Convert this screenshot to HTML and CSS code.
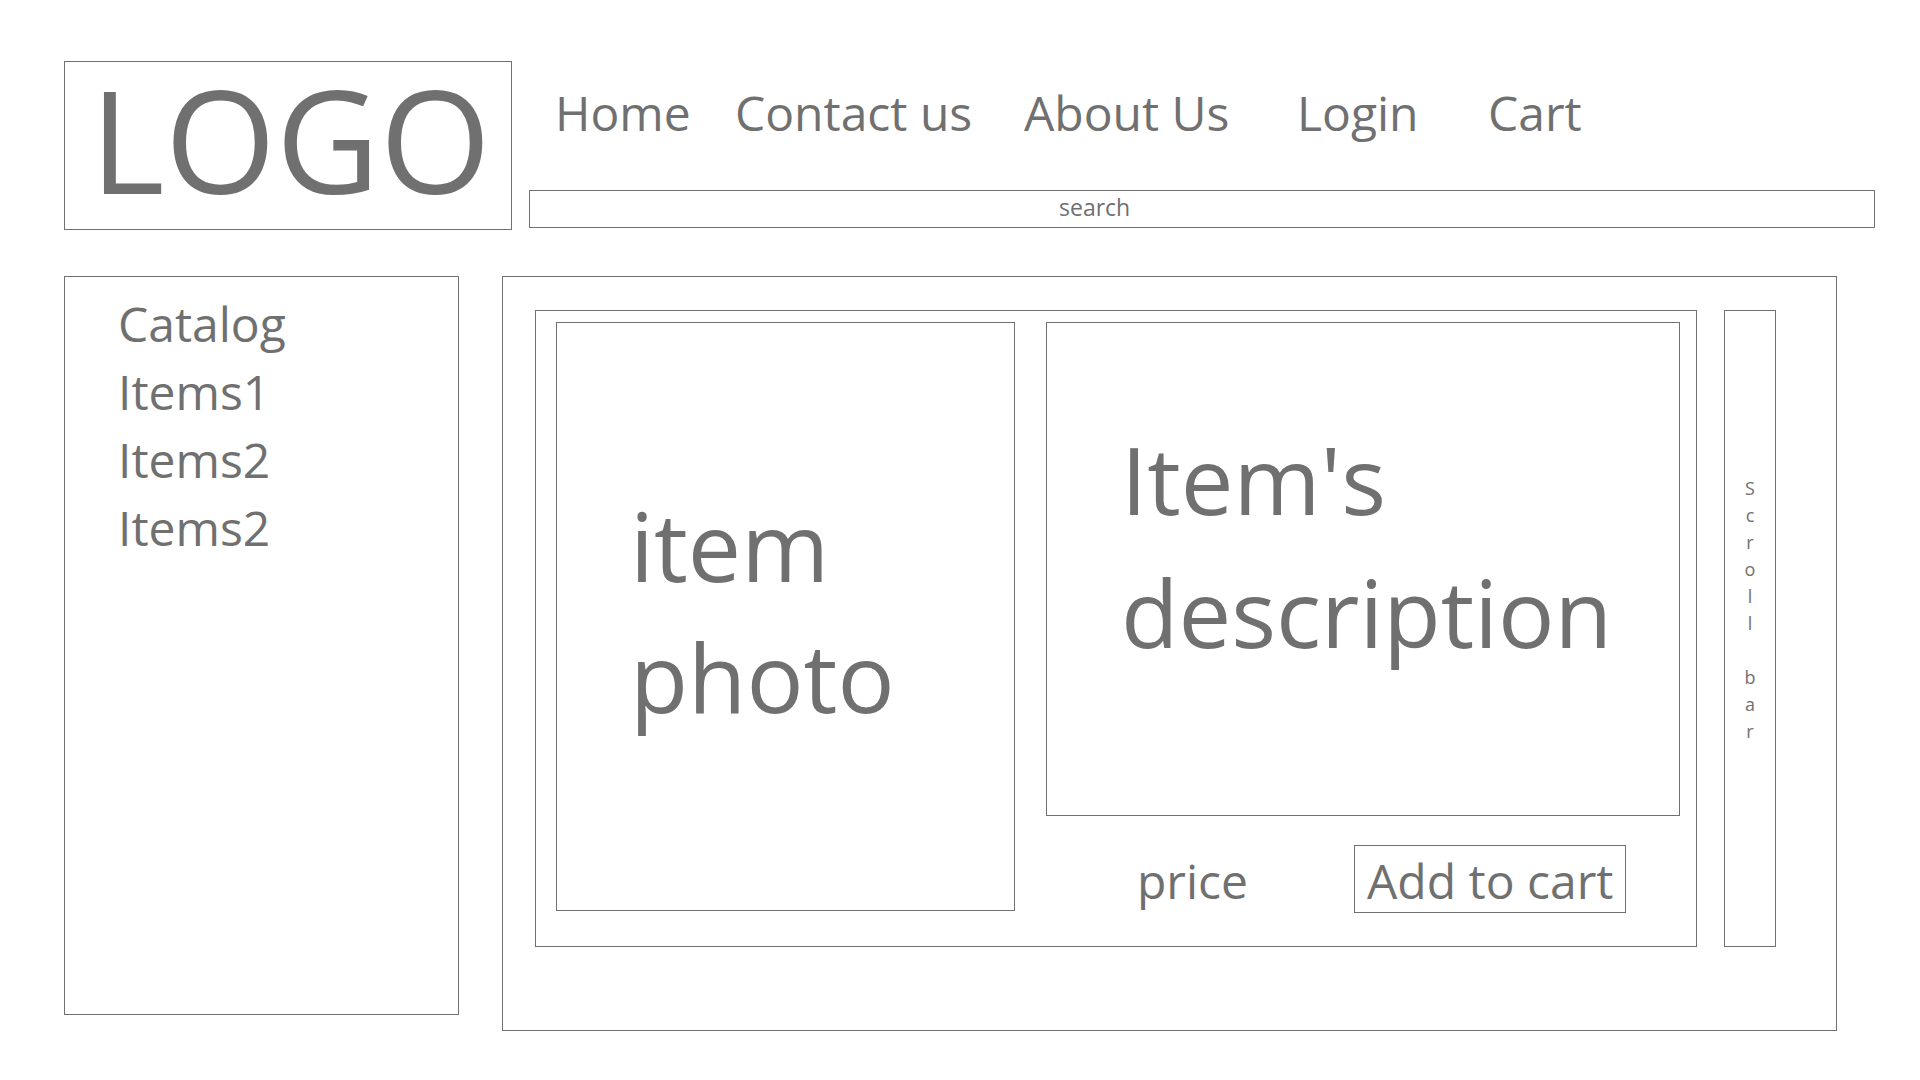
FILE: index.html
```html
<!DOCTYPE html>
<html lang="en">
<head>
<meta charset="utf-8">
<title>Shop wireframe</title>
<link rel="stylesheet" href="styles.css">
</head>
<body>
<div class="page">
  <header class="header">
    <div class="logo">LOGO</div>
    <div class="header-right">
      <nav class="nav">
        <a class="nav-home">Home</a>
        <a class="nav-contact">Contact us</a>
        <a class="nav-about">About Us</a>
        <a class="nav-login">Login</a>
        <a class="nav-cart">Cart</a>
      </nav>
      <div class="search">search</div>
    </div>
  </header>
  <div class="content">
    <aside class="sidebar">
      <div class="cat">Catalog</div>
      <div class="cat">Items1</div>
      <div class="cat">Items2</div>
      <div class="cat">Items2</div>
    </aside>
    <main class="panel">
      <div class="card">
        <div class="photo">item<br>photo</div>
        <div class="details">
          <div class="desc">Item's<br>description</div>
          <div class="buy">
            <span class="price">price</span>
            <div class="add">Add to cart</div>
          </div>
        </div>
      </div>
      <div class="scroll">S<br>c<br>r<br>o<br>l<br>l<br><br>b<br>a<br>r</div>
    </main>
  </div>
</div>
</body>
</html>
```
FILE: styles.css
```css
* { box-sizing: border-box; }

html, body {
  margin: 0;
  padding: 0;
  background: #ffffff;
}

body {
  width: 1920px;
  height: 1080px;
  overflow: hidden;
  font-family: "Open Sans", "Noto Sans", sans-serif;
  color: #707070;
}

.page {
  padding: 61px 0 0 64px;
}

.header {
  display: flex;
  align-items: flex-start;
  gap: 17px;
}

.logo {
  width: 448px;
  height: 169px;
  border: 1px solid #707070;
  font-size: 143px;
  line-height: 146px;
  padding: 4px 0 0 25px;
  white-space: nowrap;
}

.header-right {
  width: 1346px;
  padding-top: 22px;
  display: flex;
  flex-direction: column;
}

.nav {
  display: flex;
  padding-left: 26px;
  font-size: 48px;
  line-height: 60px;
  white-space: nowrap;
}

.nav a { display: block; }
.nav-home { width: 180px; }
.nav-contact { width: 289px; }
.nav-about { width: 273px; }
.nav-login { width: 191px; }

.search {
  margin-top: 47px;
  height: 38px;
  border: 1px solid #707070;
  font-size: 23px;
  line-height: 32px;
  padding-left: 529px;
}

.content {
  display: flex;
  align-items: flex-start;
  gap: 43px;
  margin-top: 46px;
}

.sidebar {
  width: 395px;
  height: 739px;
  border: 1px solid #707070;
  padding: 13px 0 0 53px;
  font-size: 48px;
  line-height: 68px;
}

.panel {
  width: 1335px;
  height: 755px;
  border: 1px solid #707070;
  display: flex;
  align-items: flex-start;
  gap: 27px;
  padding: 33px 0 0 32px;
}

.card {
  width: 1162px;
  height: 637px;
  border: 1px solid #707070;
  display: flex;
  align-items: flex-start;
  gap: 31px;
  padding: 11px 0 0 20px;
}

.photo {
  width: 459px;
  height: 589px;
  border: 1px solid #707070;
  font-size: 95px;
  line-height: 131px;
  padding: 157px 0 0 73px;
}

.details {
  width: 634px;
  display: flex;
  flex-direction: column;
}

.desc {
  height: 494px;
  border: 1px solid #707070;
  font-size: 94px;
  line-height: 133px;
  padding: 90px 0 0 74px;
}

.buy {
  margin-top: 29px;
  display: flex;
  align-items: flex-start;
  padding-left: 91px;
}

.price {
  width: 217px;
  font-size: 48px;
  line-height: 68px;
  padding-top: 2px;
}

.add {
  width: 272px;
  height: 68px;
  border: 1px solid #707070;
  font-size: 48px;
  line-height: 64px;
  padding: 3px 0 0 12px;
  white-space: nowrap;
}

.scroll {
  width: 52px;
  height: 637px;
  border: 1px solid #707070;
  font-size: 18px;
  line-height: 27px;
  text-align: center;
  padding-top: 164px;
}
```
